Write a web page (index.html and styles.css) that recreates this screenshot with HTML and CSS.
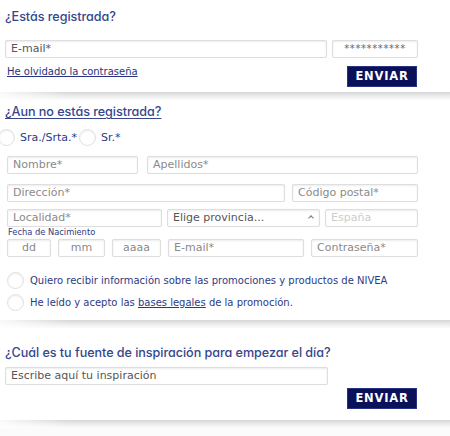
FILE: index.html
```html
<!DOCTYPE html>
<html lang="es">
  <head>
    <meta charset="UTF-8" />
    <title>Registro</title>
    <link rel="stylesheet" href="styles.css">
  </head>
  <body>
    <div class="panel login">
      <h2 class="title">¿Estás registrada?</h2>
      <div class="row first">
        <span class="field dark grow">E-mail*</span>
        <span class="field dark pass">***********</span>
      </div>
      <div class="row actions">
        <a class="forgot" href="#">He olvidado la contraseña</a>
        <span class="btn">ENVIAR</span>
      </div>
    </div>
    <div class="band"></div>

    <div class="panel signup">
      <h2 class="title underline">¿Aun no estás registrada?</h2>
      <div class="radios">
        <span class="circle cut"></span>
        <span class="label">Sra./Srta.*</span>
        <span class="circle"></span>
        <span class="label">Sr.*</span>
      </div>
      <div class="row r1">
        <span class="field w-nombre">Nombre*</span>
        <span class="field grow">Apellidos*</span>
      </div>
      <div class="row r2">
        <span class="field grow">Dirección*</span>
        <span class="field w-cp">Código postal*</span>
      </div>
      <div class="row r3">
        <span class="field w-loc">Localidad*</span>
        <span class="field select w-prov">Elige provincia...<i class="caret"></i></span>
        <span class="field off grow">España</span>
      </div>
      <div class="small">Fecha de Nacimiento</div>
      <div class="row r4">
        <span class="field center w-dd">dd</span>
        <span class="field center w-mm">mm</span>
        <span class="field center w-aa">aaaa</span>
        <span class="field w-mail">E-mail*</span>
        <span class="field grow">Contraseña*</span>
      </div>
      <div class="check c1">
        <span class="circle"></span>
        <span class="label">Quiero recibir información sobre las promociones y productos de NIVEA</span>
      </div>
      <div class="check c2">
        <span class="circle"></span>
        <span class="label">He leído y acepto las <a href="#">bases legales</a> de la promoción.</span>
      </div>
    </div>
    <div class="band"></div>

    <div class="panel inspire">
      <h2 class="title">¿Cuál es tu fuente de inspiración para empezar el día?</h2>
      <div class="row first">
        <span class="field dark w-insp">Escribe aquí tu inspiración</span>
      </div>
      <div class="row actions right">
        <span class="btn">ENVIAR</span>
      </div>
    </div>
    <div class="band"></div>
    <div class="foot"></div>
  </body>
</html>
```

FILE: styles.css
```css
* {
  margin: 0;
  padding: 0;
  box-sizing: border-box;
}

html,
body {
  background: #fff;
}

body {
  width: 450px;
  height: 436px;
  overflow: hidden;
  font-family: "DejaVu Sans", Verdana, sans-serif;
  color: #2c3a86;
}

.panel {
  background: #fff;
  padding: 0 32px 0 5px;
}

.title {
  font: 500 12.6px/16px Inter, sans-serif;
  font-feature-settings: "cv11";
  color: #35468c;
  letter-spacing: -0.05px;
}

.title.underline {
  text-decoration: underline;
  text-underline-offset: 2px;
  text-decoration-thickness: 1px;
}

.row {
  display: flex;
}

.field {
  display: block;
  height: 18px;
  padding: 0 5px;
  background: #fff;
  border: 1px solid #dedede;
  border-radius: 2px;
  box-shadow: inset 0 1px 2px rgba(0, 0, 0, 0.08), 0 0 1px rgba(0, 0, 0, 0.06);
  font-size: 11px;
  line-height: 16px;
  color: #8a8a8a;
  white-space: nowrap;
  overflow: hidden;
}

.field.dark {
  color: #555;
}

.field.off {
  color: #ccc;
}

.field.center {
  text-align: center;
}

.grow {
  flex: 1;
}

/* panel 1 */
.login {
  padding-top: 9px;
  height: 92px;
}

.login .first {
  margin-top: 15px;
  gap: 5px;
}

.login .pass {
  width: 86px;
  text-align: center;
  font-size: 10px;
  letter-spacing: 0.6px;
  color: #666;
}

.actions {
  justify-content: space-between;
  align-items: flex-start;
  margin-top: 7px;
  padding: 0 1px 0 2px;
}

.forgot {
  font-size: 10px;
  color: #27347f;
  text-decoration: underline;
  line-height: 13px;
}

.btn {
  display: block;
  width: 70px;
  height: 21px;
  margin-top: 1px;
  background: #0b1158;
  border: 1px solid #2a3380;
  color: #fff;
  font: 900 11.5px/19px "DejaVu Sans", sans-serif;
  text-align: center;
  letter-spacing: 0.8px;
}

/* separator bands */
.band {
  position: relative;
  height: 8px;
  background: linear-gradient(#d6d6d6, #ececec 50%, #fbfbfb);
}

.band::before {
  content: "";
  position: absolute;
  left: 0;
  top: 0;
  bottom: 0;
  width: 70px;
  background: linear-gradient(to right, rgba(255, 255, 255, 0.85), rgba(255, 255, 255, 0));
}

/* panel 2 */
.signup {
  padding-top: 4px;
  height: 220px;
}

.radios {
  display: flex;
  align-items: center;
  margin-top: 8px;
  margin-left: -7px;
  height: 18px;
}

.circle {
  display: block;
  width: 17px;
  height: 17px;
  flex: none;
  border-radius: 50%;
  background: #fff;
  border: 1px solid #e0e0e0;
  box-shadow: inset 0 1px 2px rgba(0, 0, 0, 0.08);
}

.label {
  font-size: 10px;
  color: #2c3a86;
  white-space: nowrap;
}

.radios .label {
  margin: 0 2px 0 5px;
  font-size: 11px;
}

.r1 {
  margin: 10px 0 0 2px;
  gap: 9px;
}

.r2 {
  margin: 10px 0 0 2px;
  gap: 7px;
}

.r3 {
  margin: 7px 0 0 2px;
  gap: 5px;
}

.r4 {
  margin: 2px 0 0 2px;
  gap: 7px;
}

.w-nombre { width: 131px; }
.w-cp { width: 126px; }
.w-loc { width: 155px; }
.w-prov { width: 153px; }
.w-dd { width: 44px; }
.w-mm { width: 47px; }
.w-aa { width: 49px; }
.w-mail { width: 136px; }
.w-insp { width: 323px; }

.select {
  position: relative;
  color: #555;
}

.caret {
  position: absolute;
  right: 6px;
  top: 6px;
  width: 4px;
  height: 4px;
  border-left: 1px solid #777;
  border-top: 1px solid #777;
  transform: rotate(45deg);
}

.small {
  margin: 1px 0 0 3px;
  font-size: 8.3px;
  line-height: 9px;
  color: #2c3a86;
}

.check {
  display: flex;
  align-items: center;
  margin-left: 2px;
}

.check .label {
  margin-left: 6px;
  font-size: 10px;
}

.check a {
  color: #2c3a86;
  text-decoration: underline;
}

.c1 {
  margin-top: 15px;
}

.c2 {
  margin-top: 5px;
}

/* panel 3 */
.inspire {
  padding-top: 17px;
  height: 92px;
}

.inspire .first {
  margin-top: 6px;
}

.right {
  justify-content: flex-end;
  margin-top: 2px;
}

.foot {
  height: 10px;
  background: #fbfbfb;
}
```
